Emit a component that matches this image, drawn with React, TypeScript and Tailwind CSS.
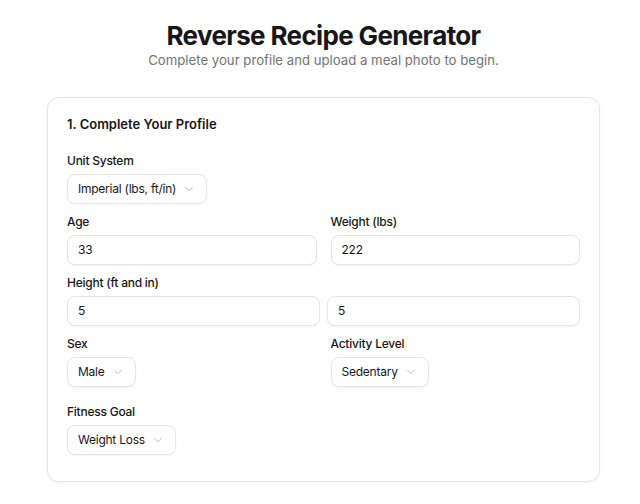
import React from 'react';
import { ChevronDown } from 'lucide-react';

function Label({ children }: { children: React.ReactNode }) {
  return (
    <label className="block h-4 text-[12px] font-medium leading-4 tracking-[-0.02em] text-[#171717]">
      {children}
    </label>
  );
}

function Select({ value }: { value: string }) {
  return (
    <div className="inline-flex h-[30px] items-center gap-1.5 rounded-lg border border-[#e5e5e5] bg-white pl-[10px] pr-[10px] text-[12px] tracking-[-0.02em] text-[#171717] shadow-[0_1px_2px_rgba(0,0,0,0.05)]">
      <span>{value}</span>
      <ChevronDown size={14} strokeWidth={1.25} className="text-[#a3a3a3]" />
    </div>
  );
}

function Input({ value }: { value: string }) {
  return (
    <div className="flex h-[30px] w-full items-center rounded-lg border border-[#e5e5e5] bg-white px-[10px] text-[12px] tracking-[-0.02em] text-[#171717] shadow-[0_1px_2px_rgba(0,0,0,0.05)]">
      {value}
    </div>
  );
}

function Field({ label, children }: { label: string; children: React.ReactNode }) {
  return (
    <div className="flex flex-col gap-[5px]">
      <Label>{label}</Label>
      {children}
    </div>
  );
}

export default function App() {
  return (
    <div className="min-h-[504px] bg-white font-['Inter',sans-serif] text-[#171717]">
      <div className="ml-[47px] mr-[40px] pt-5">
        <div className="flex flex-col items-center">
          <h1 className="text-[26px] font-bold leading-8 tracking-tight">Reverse Recipe Generator</h1>
          <p className="-mt-[2px] text-[13.2px] leading-5 text-[#737373]">
            Complete your profile and upload a meal photo to begin.
          </p>
        </div>

        <div className="mt-[27px] rounded-xl border border-[#e5e5e5] bg-white px-[19px] pb-[26px] pt-4 shadow-[0_1px_3px_rgba(0,0,0,0.06)]">
          <h2 className="text-[13px] font-semibold leading-5">1. Complete Your Profile</h2>

          <div className="mt-[19px] flex flex-col gap-[10px]">
            <Field label="Unit System">
              <div><Select value="Imperial (lbs, ft/in)" /></div>
            </Field>

            <div className="grid grid-cols-2 gap-[14px]">
              <Field label="Age">
                <Input value="33" />
              </Field>
              <Field label="Weight (lbs)">
                <Input value="222" />
              </Field>
            </div>

            <Field label="Height (ft and in)">
              <div className="grid grid-cols-2 gap-[7px]">
                <Input value="5" />
                <Input value="5" />
              </div>
            </Field>

            <div className="grid grid-cols-2 gap-[14px]">
              <Field label="Sex">
                <div><Select value="Male" /></div>
              </Field>
              <Field label="Activity Level">
                <div><Select value="Sedentary" /></div>
              </Field>
            </div>

            <div className="mt-[7px]">
              <Field label="Fitness Goal">
                <div><Select value="Weight Loss" /></div>
              </Field>
            </div>
          </div>
        </div>
      </div>
    </div>
  );
}
